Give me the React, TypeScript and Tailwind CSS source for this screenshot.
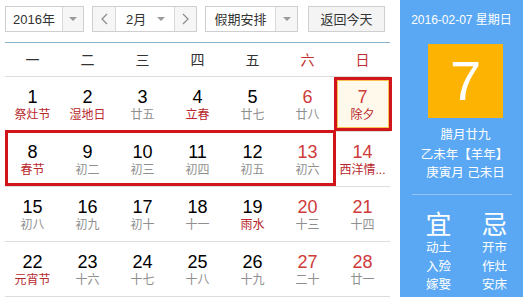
import React from "react";

type Day = { n: number; l: string; f?: boolean };

const rows: Day[][] = [
  [
    { n: 1, l: "祭灶节", f: true },
    { n: 2, l: "湿地日", f: true },
    { n: 3, l: "廿五" },
    { n: 4, l: "立春", f: true },
    { n: 5, l: "廿七" },
    { n: 6, l: "廿八" },
    { n: 7, l: "除夕", f: true },
  ],
  [
    { n: 8, l: "春节", f: true },
    { n: 9, l: "初二" },
    { n: 10, l: "初三" },
    { n: 11, l: "初四" },
    { n: 12, l: "初五" },
    { n: 13, l: "初六" },
    { n: 14, l: "西洋情...", f: true },
  ],
  [
    { n: 15, l: "初八" },
    { n: 16, l: "初九" },
    { n: 17, l: "初十" },
    { n: 18, l: "十一" },
    { n: 19, l: "雨水", f: true },
    { n: 20, l: "十三" },
    { n: 21, l: "十四" },
  ],
  [
    { n: 22, l: "元宵节", f: true },
    { n: 23, l: "十六" },
    { n: 24, l: "十七" },
    { n: 25, l: "十八" },
    { n: 26, l: "十九" },
    { n: 27, l: "二十" },
    { n: 28, l: "廿一" },
  ],
];

const weekdays = ["一", "二", "三", "四", "五", "六", "日"];

const FONT = { fontFamily: '"Liberation Sans", "Noto Sans CJK SC", sans-serif' };

function Caret() {
  return (
    <svg width="8" height="4" viewBox="0 0 8 4">
      <path d="M0 0 L8 0 L4 4 Z" fill="#9a9a9a" />
    </svg>
  );
}

function Chevron({ dir }: { dir: "l" | "r" }) {
  return (
    <svg width="7" height="12" viewBox="0 0 7 12">
      <path
        d={dir === "l" ? "M6 1 L1 6 L6 11" : "M1 1 L6 6 L1 11"}
        fill="none"
        stroke="#8a8a8a"
        strokeWidth="1.2"
      />
    </svg>
  );
}

export default function App() {
  return (
    <div className="w-[523px] h-[297px] flex bg-white overflow-hidden text-[#333]" style={FONT}>
      {/* Left calendar */}
      <div className="relative w-[400px] h-[297px] pl-[5px] pr-[10px]">
        {/* Header controls */}
        <div className="h-[42px] pt-[6px] flex items-start text-[13px]">
          <div className="flex w-[79px] h-[26px] border border-[#cfcfcf] bg-white">
            <div className="w-[56px] flex items-center justify-center leading-none">2016年</div>
            <div className="flex-1 border-l border-[#d9d9d9] bg-[#f6f6f6] flex items-center justify-center">
              <Caret />
            </div>
          </div>
          <div className="ml-[8px] flex w-[105px] h-[26px] border border-[#cfcfcf] bg-white">
            <div className="w-[22px] bg-[#f6f6f6] flex items-center justify-center">
              <Chevron dir="l" />
            </div>
            <div className="w-[60px] border-l border-r border-[#d9d9d9] flex items-center pl-[10px] leading-none">
              <span>2月</span>
              <span className="ml-[11px] flex">
                <Caret />
              </span>
            </div>
            <div className="flex-1 bg-[#f6f6f6] flex items-center justify-center">
              <Chevron dir="r" />
            </div>
          </div>
          <div className="ml-[8px] flex w-[93px] h-[26px] border border-[#cfcfcf] bg-white">
            <div className="w-[69px] flex items-center justify-center leading-none">假期安排</div>
            <div className="flex-1 border-l border-[#d9d9d9] bg-[#f6f6f6] flex items-center justify-center">
              <Caret />
            </div>
          </div>
          <div className="ml-[10px] w-[77px] h-[26px] border border-[#cfcfcf] bg-[#f4f4f4] flex items-center justify-center leading-none">
            返回今天
          </div>
        </div>

        {/* Grid */}
        <div className="border-t border-[#8ab4d0]">
          <div className="grid grid-cols-[repeat(7,55px)] h-[34px] border-b border-[#dddddd]">
            {weekdays.map((w, i) => (
              <div
                key={w}
                className={`flex items-center justify-center text-[14px] leading-none ${
                  i >= 5 ? "text-[#c0302f]" : "text-[#333]"
                }`}
              >
                {w}
              </div>
            ))}
          </div>
          {rows.map((row, ri) => (
            <div key={ri} className="grid grid-cols-[repeat(7,55px)] h-[55px] border-b border-[#dddddd]">
              {row.map((d, ci) => (
                <div
                  key={d.n}
                  className={`flex flex-col items-center pt-[10px] ${
                    d.n === 7 ? "bg-[#fff9ec]" : ""
                  }`}
                >
                  <div
                    className={`text-[18px] leading-[20px] ${
                      ci >= 5 ? "text-[#cf3a3a]" : "text-black"
                    }`}
                    style={{ fontFamily: '"Liberation Sans", sans-serif' }}
                  >
                    {d.n}
                  </div>
                  <div
                    className={`text-[12px] leading-[16px] whitespace-nowrap ${
                      d.f ? "text-[#b8272c]" : "text-[#8f8f8f]"
                    }`}
                  >
                    {d.l}
                  </div>
                </div>
              ))}
            </div>
          ))}
        </div>

        {/* Holiday highlight overlays */}
        <div className="absolute left-[5px] top-[130px] w-[331px] h-[56px] border-[3px] border-[#d0161b]" />
        <div className="absolute left-[334px] top-[77px] w-[58px] h-[54px] border-[3px] border-[#d0161b]">
          <div className="w-full h-full border border-[#f7c14e]" />
        </div>
      </div>

      {/* Right panel */}
      <div className="w-[123px] h-[297px] bg-[#5aa8f4] text-white flex flex-col items-center">
        <div className="mt-[12px] text-[12px] leading-[16px] whitespace-nowrap">2016-02-07 星期日</div>
        <div
          className="mt-[16px] ml-[8px] w-[75px] h-[74px] bg-[#fdb302] flex items-center justify-center text-[56px] leading-none"
          style={{ fontFamily: '"Liberation Sans", sans-serif' }}
        >
          7
        </div>
        <div className="mt-[8px] pl-[8px] text-[12.5px] leading-[18px]">腊月廿九</div>
        <div className="mt-[2px] pl-[6px] text-[12.5px] leading-[18px] whitespace-nowrap">乙未年【羊年】</div>
        <div className="pl-[8px] text-[12.5px] leading-[18px] whitespace-nowrap">庚寅月 己未日</div>
        <div className="mt-[12px] ml-[1px] w-[100px] h-px bg-[#92c4f7]" />
        <div className="mt-[16px] pl-[10px] grid grid-cols-[56px_56px]">
          <div className="flex flex-col items-center">
            <div className="text-[26px] leading-[28px]">宜</div>
            <div className="text-[12.5px] leading-[18.5px]">动土</div>
            <div className="text-[12.5px] leading-[18.5px]">入殓</div>
            <div className="text-[12.5px] leading-[18.5px]">嫁娶</div>
          </div>
          <div className="flex flex-col items-center">
            <div className="text-[26px] leading-[28px]">忌</div>
            <div className="text-[12.5px] leading-[18.5px]">开市</div>
            <div className="text-[12.5px] leading-[18.5px]">作灶</div>
            <div className="text-[12.5px] leading-[18.5px]">安床</div>
          </div>
        </div>
      </div>
    </div>
  );
}
